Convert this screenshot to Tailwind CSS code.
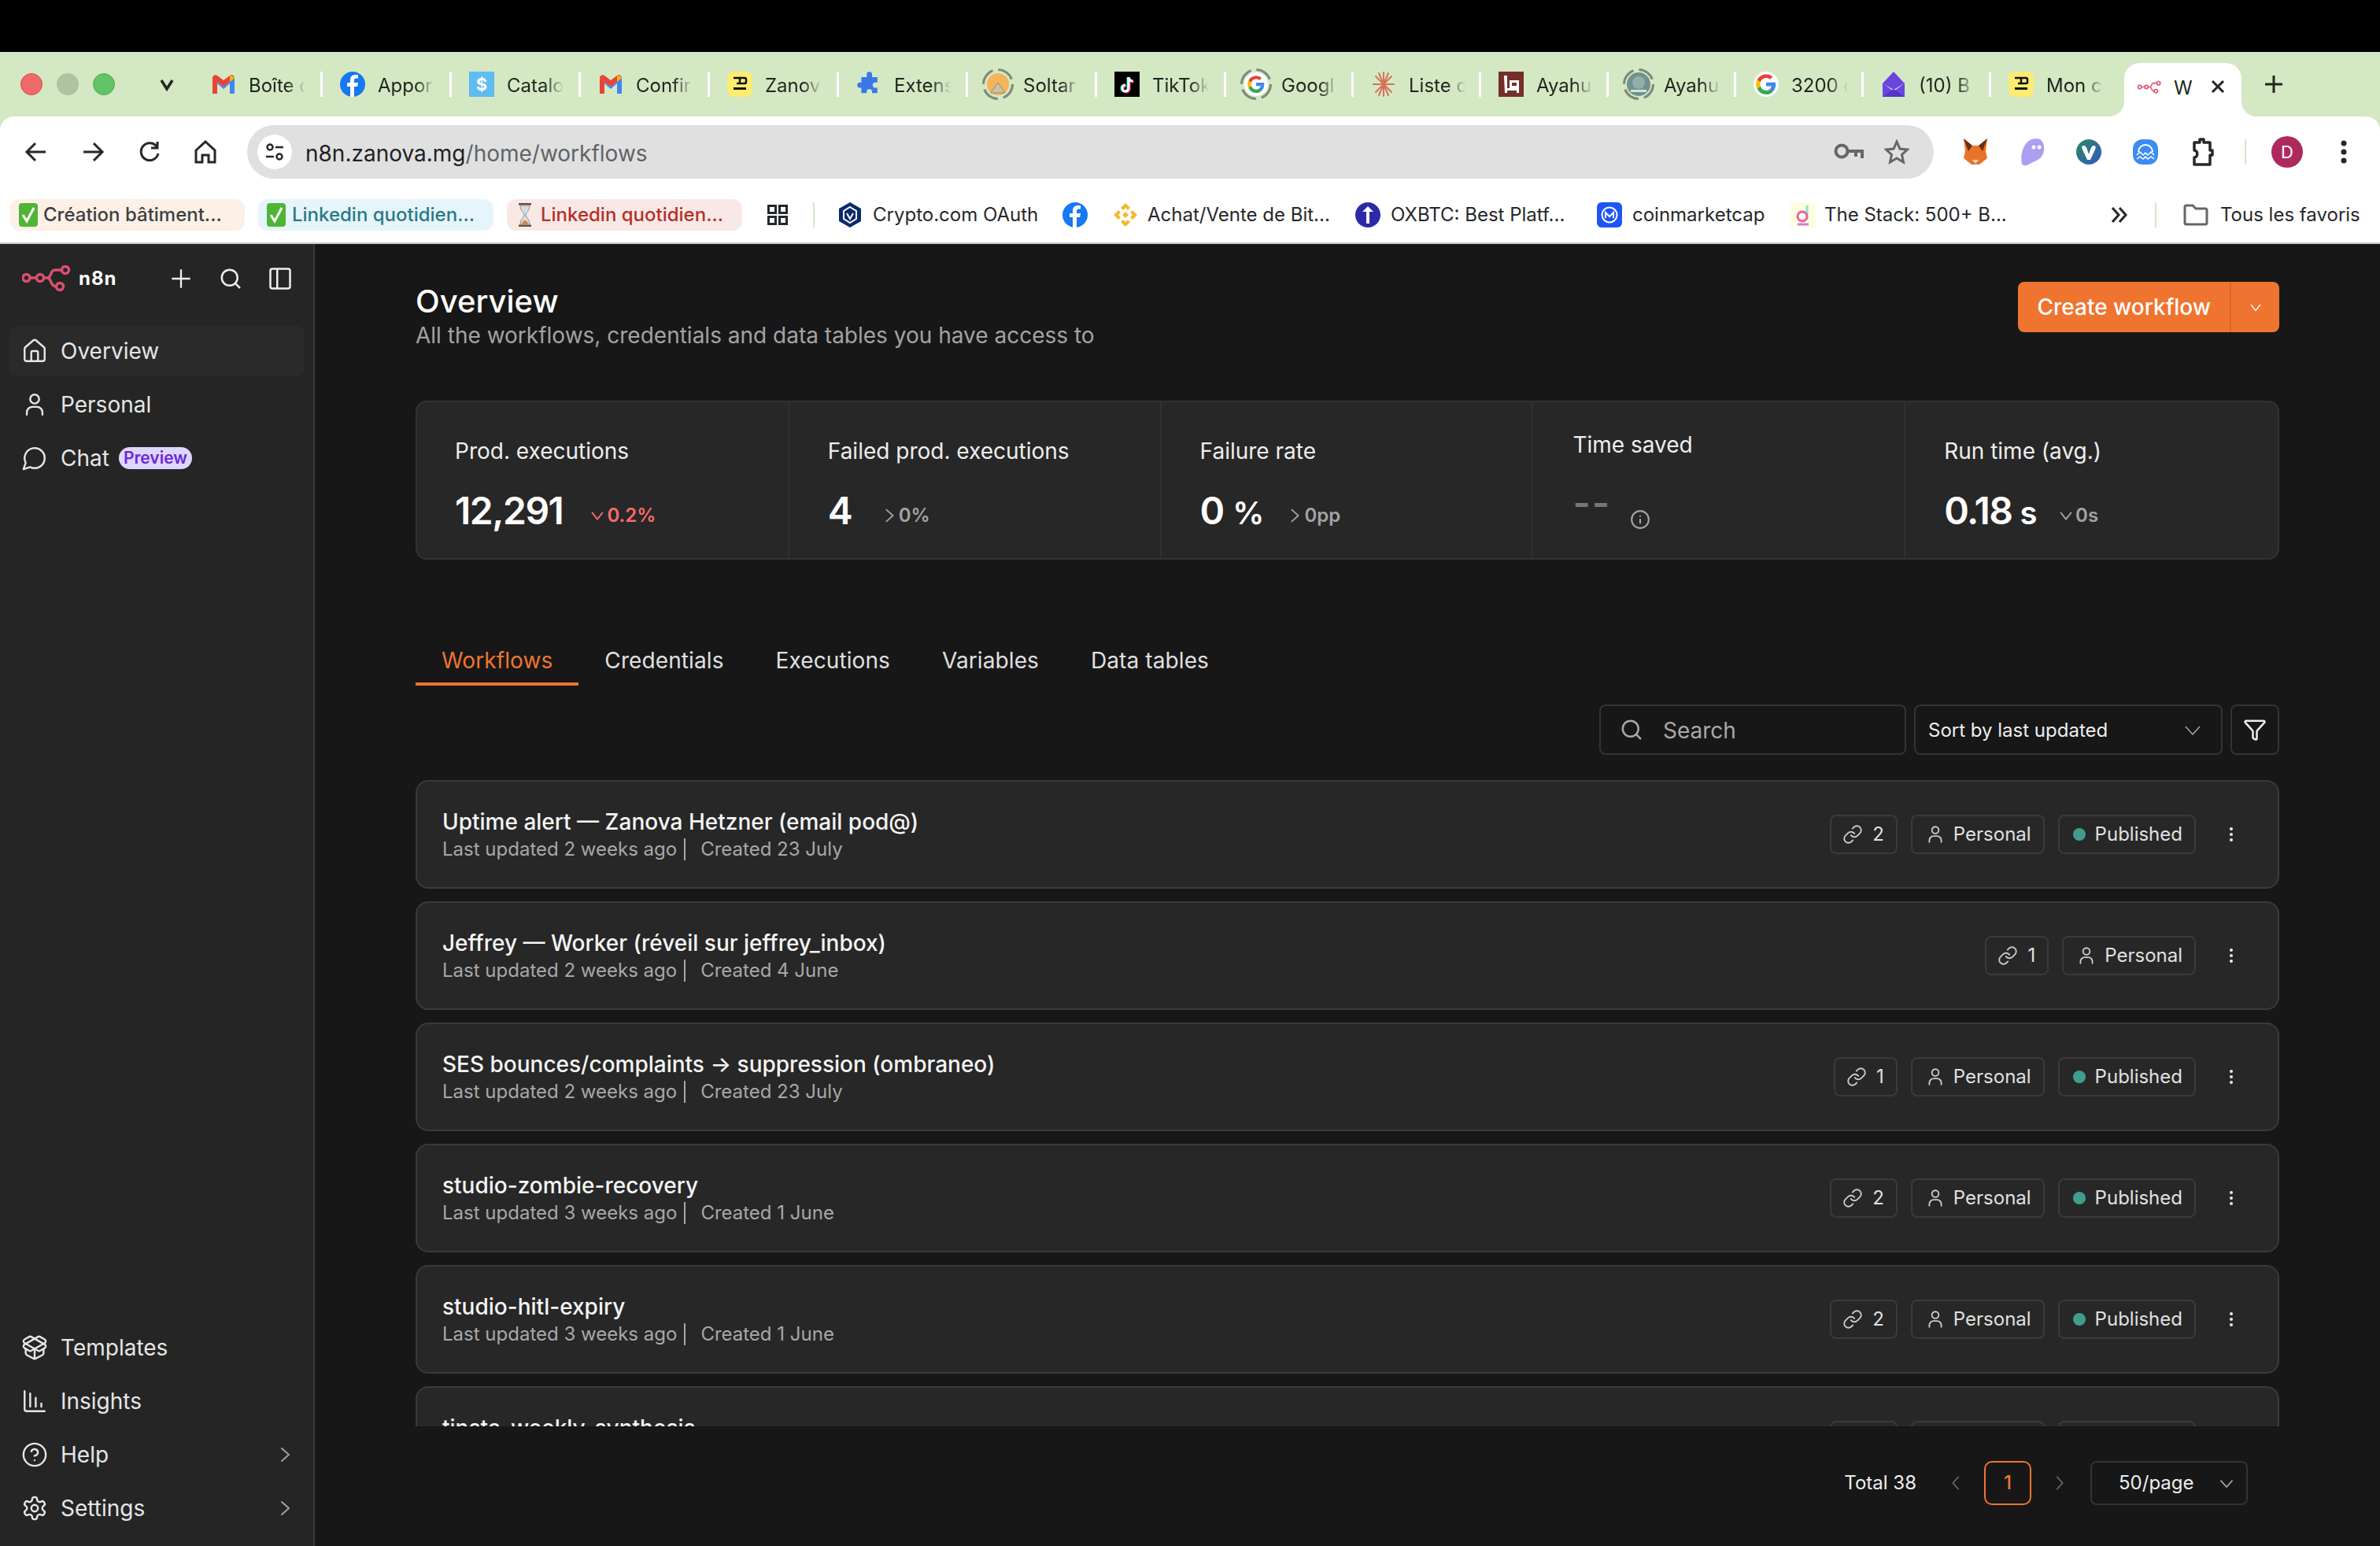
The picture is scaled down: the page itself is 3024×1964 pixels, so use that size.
<!DOCTYPE html>
<html lang="en">
<head>
  <meta charset="UTF-8" />
  <title>n8n Overview</title>
  <script src="https://cdn.jsdelivr.net/npm/@tailwindcss/browser@4"></script>
</head>
<body class="bg-black font-['Inter',sans-serif] overflow-hidden">

  <!-- shared icons -->
  <svg class="hidden">
    <symbol id="i-gmail" viewBox="0 0 32 32">
      <path d="M2 28V8l14 11L30 8v20h-6V15l-8 7-8-7v13z" fill="#4285f4"/>
      <path d="M2 28V8l6 5v15z" fill="#ea4335"/>
      <path d="M2 8l14 11 14-11v-1a4 4 0 0 0-6-2l-8 6-8-6a4 4 0 0 0-6 2z" fill="#ea4335"/>
      <path d="M24 28V13l6-5v20z" fill="#4285f4"/>
      <path d="M24 5l6 2v1l-6 5z" fill="#fbbc04"/>
    </symbol>
    <symbol id="i-fb" viewBox="0 0 32 32">
      <circle cx="16" cy="16" r="16" fill="#1877f2"/>
      <path d="M18 32V19h4.200l.8-5h-5v-3c0-1.500.7-2.600 2.800-2.600H23V4.200C22 4 20.600 3.900 19.500 3.900c-3.800 0-6.500 2.300-6.500 6.600V14H9v5h4v13z" fill="#fff"/>
    </symbol>
    <symbol id="i-yellow" viewBox="0 0 32 32">
      <rect width="32" height="32" rx="8" fill="#fdec6f"/>
      <rect x="8" y="20" width="16" height="3" fill="#111"/>
      <path d="M8 8h14a2 2 0 0 1 2 2v3a2 2 0 0 1-2 2H12M16 8v7" fill="none" stroke="#111" stroke-width="2.500"/>
    </symbol>
    <symbol id="i-google" viewBox="0 0 32 32">
      <path d="M31 16.400c0-1.100-.1-2.200-.3-3.200H16v6h8.400a7 7 0 0 1-3.100 4.700v3.900h5c3-2.700 4.700-6.700 4.700-11.400z" fill="#4285f4"/>
      <path d="M16 32c4.200 0 7.700-1.400 10.300-3.800l-5-3.900c-1.400.9-3.200 1.500-5.300 1.500-4 0-7.500-2.700-8.700-6.400H2.100v4A16 16 0 0 0 16 32z" fill="#34a853"/>
      <path d="M7.300 19.400a9.500 9.500 0 0 1 0-6.800v-4H2.100a16 16 0 0 0 0 14.800z" fill="#fbbc04"/>
      <path d="M16 6.300c2.300 0 4.300.8 5.900 2.300l4.400-4.400A16 16 0 0 0 2.100 8.600l5.200 4C8.500 9 12 6.300 16 6.300z" fill="#ea4335"/>
    </symbol>
    <symbol id="i-ring" viewBox="0 0 40 40">
      <circle cx="20" cy="20" r="18.500" fill="none" stroke="#7f8a78" stroke-width="3" stroke-dasharray="22 7"/>
    </symbol>
    <symbol id="i-n8n" viewBox="0 0 62 34">
      <g fill="none" stroke="currentColor" stroke-width="3.500">
        <circle cx="5.500" cy="16" r="4.500"/>
        <circle cx="23" cy="16" r="4.500"/>
        <circle cx="55" cy="6" r="4.500"/>
        <circle cx="48" cy="27" r="4.500"/>
        <path d="M10 16h8.500M27.500 16h5c5 0 3-10 9-10h8.500M32.500 16c5 0 3 11 11 11"/>
      </g>
    </symbol>
    <symbol id="i-check" viewBox="0 0 24 30">
      <rect width="24" height="30" rx="4" fill="#4fb535"/>
      <path d="M5 15l5 8 9-17" fill="none" stroke="#fff" stroke-width="3"/>
    </symbol>
    <symbol id="i-link" viewBox="0 0 24 24">
      <g fill="none" stroke="currentColor" stroke-width="1.700" stroke-linecap="round" stroke-linejoin="round">
        <path d="M10 13a5 5 0 0 0 7.540.54l3-3a5 5 0 0 0-7.070-7.070l-1.720 1.710"/>
        <path d="M14 11a5 5 0 0 0-7.540-.54l-3 3a5 5 0 0 0 7.070 7.070l1.710-1.710"/>
      </g>
    </symbol>
    <symbol id="i-user" viewBox="0 0 24 24">
      <g fill="none" stroke="currentColor" stroke-width="1.700" stroke-linecap="round">
        <circle cx="12" cy="7" r="4"/>
        <path d="M5 21v-2a5 5 0 0 1 5-5h4a5 5 0 0 1 5 5v2"/>
      </g>
    </symbol>
    <symbol id="i-dots" viewBox="0 0 24 24">
      <circle cx="12" cy="5" r="2" fill="currentColor"/>
      <circle cx="12" cy="12" r="2" fill="currentColor"/>
      <circle cx="12" cy="19" r="2" fill="currentColor"/>
    </symbol>
    <symbol id="i-down" viewBox="0 0 24 24">
      <path d="m5 8 7 9 7-9" fill="none" stroke="currentColor" stroke-width="2" stroke-linecap="round" stroke-linejoin="round"/>
    </symbol>
    <symbol id="i-right" viewBox="0 0 24 24">
      <path d="m8 4 9 8-9 8" fill="none" stroke="currentColor" stroke-width="2" stroke-linecap="round" stroke-linejoin="round"/>
    </symbol>
    <symbol id="i-search" viewBox="0 0 24 24">
      <g fill="none" stroke="currentColor" stroke-width="2" stroke-linecap="round"><circle cx="11" cy="11" r="8"/><path d="m21 21-4.300-4.300"/></g>
    </symbol>
  </svg>

  <div class="w-[3024px] h-[1964px] flex flex-col overflow-hidden">

    <!-- Browser: black bar -->
    <div class="h-[66px] bg-black shrink-0"></div>

    <div class="bg-[#d4e8c4] shrink-0">
      <!-- Tab strip -->
      <div class="h-[82px] flex items-center text-[24px] text-[#22261f]">
        <div class="w-[246px] flex items-center pl-[26px]">
          <span class="w-[28px] h-[28px] rounded-full bg-[#ef6a6a] border border-[#d9494a]"></span>
          <span class="w-[28px] h-[28px] rounded-full bg-[#aec4a0] ml-[18px]"></span>
          <span class="w-[28px] h-[28px] rounded-full bg-[#62c466] border border-[#4dab52] ml-[18px]"></span>
          <svg class="w-[24px] h-[24px] ml-[54px] text-[#22261f]" viewBox="0 0 24 24"><path d="m5 7 7 11 7-11" fill="none" stroke="currentColor" stroke-width="3.500"/></svg>
        </div>

        <div class="w-[164px] h-[32px] flex items-center pl-[22px] gap-[16px] border-r-[3px] border-white">
          <svg class="w-[32px] h-[32px] shrink-0"><use href="#i-gmail"/></svg>
          <span class="w-[80px] pt-[3px] whitespace-nowrap [mask-image:linear-gradient(90deg,#000_60%,transparent_90%)]">Boîte d</span>
        </div>
        <div class="w-[164px] h-[32px] flex items-center pl-[22px] gap-[16px] border-r-[3px] border-white">
          <svg class="w-[32px] h-[32px] shrink-0"><use href="#i-fb"/></svg>
          <span class="w-[80px] pt-[3px] whitespace-nowrap [mask-image:linear-gradient(90deg,#000_60%,transparent_90%)]">Appor</span>
        </div>
        <div class="w-[164px] h-[32px] flex items-center pl-[22px] gap-[16px] border-r-[3px] border-white">
          <span class="w-[32px] h-[32px] shrink-0 bg-[#5fbcf0] text-white text-[22px] font-bold flex items-center justify-center">$</span>
          <span class="w-[80px] pt-[3px] whitespace-nowrap [mask-image:linear-gradient(90deg,#000_60%,transparent_90%)]">Catalo</span>
        </div>
        <div class="w-[164px] h-[32px] flex items-center pl-[22px] gap-[16px] border-r-[3px] border-white">
          <svg class="w-[32px] h-[32px] shrink-0"><use href="#i-gmail"/></svg>
          <span class="w-[80px] pt-[3px] whitespace-nowrap [mask-image:linear-gradient(90deg,#000_60%,transparent_90%)]">Confir</span>
        </div>
        <div class="w-[164px] h-[32px] flex items-center pl-[22px] gap-[16px] border-r-[3px] border-white">
          <svg class="w-[32px] h-[32px] shrink-0"><use href="#i-yellow"/></svg>
          <span class="w-[80px] pt-[3px] whitespace-nowrap [mask-image:linear-gradient(90deg,#000_60%,transparent_90%)]">Zanov</span>
        </div>
        <div class="w-[164px] h-[32px] flex items-center pl-[22px] gap-[16px] border-r-[3px] border-white">
          <svg class="w-[32px] h-[32px] shrink-0" viewBox="0 0 32 32"><path d="M12 3a4 4 0 0 1 8 0v4h8v8h-3a4 4 0 0 0 0 8h3v8h-8v-2a4 4 0 0 0-8 0v2H4v-8H2a4 4 0 0 1 0-8h2V7h8z" fill="#3b78e7" transform="translate(3 1) scale(.85)"/></svg>
          <span class="w-[80px] pt-[3px] whitespace-nowrap [mask-image:linear-gradient(90deg,#000_60%,transparent_90%)]">Extens</span>
        </div>
        <div class="w-[164px] h-[32px] flex items-center pl-[22px] gap-[16px] border-r-[3px] border-white">
          <span class="relative w-[32px] h-[32px] shrink-0 flex items-center justify-center">
            <svg class="absolute w-[40px] h-[40px]"><use href="#i-ring"/></svg>
            <svg class="w-[28px] h-[28px]" viewBox="0 0 28 28"><circle cx="14" cy="14" r="14" fill="#f4b45a"/><path d="M14 12 5 25h18z" fill="#cfc2a4" stroke="#8d8a78"/></svg>
          </span>
          <span class="w-[80px] pt-[3px] whitespace-nowrap [mask-image:linear-gradient(90deg,#000_60%,transparent_90%)]">Soltar</span>
        </div>
        <div class="w-[164px] h-[32px] flex items-center pl-[22px] gap-[16px] border-r-[3px] border-white">
          <svg class="w-[32px] h-[32px] shrink-0" viewBox="0 0 32 32"><rect width="32" height="32" fill="#000"/><path d="M18 7v14a4 4 0 1 1-4-4M18 7c.5 3 2.500 5 5.500 5" fill="none" stroke="#25f4ee" stroke-width="3" transform="translate(-1 0)"/><path d="M18 7v14a4 4 0 1 1-4-4M18 7c.5 3 2.500 5 5.500 5" fill="none" stroke="#fe2c55" stroke-width="3" transform="translate(1 1)"/><path d="M18 7v14a4 4 0 1 1-4-4M18 7c.5 3 2.500 5 5.500 5" fill="none" stroke="#fff" stroke-width="3"/></svg>
          <span class="w-[80px] pt-[3px] whitespace-nowrap [mask-image:linear-gradient(90deg,#000_60%,transparent_90%)]">TikTok</span>
        </div>
        <div class="w-[162px] h-[32px] flex items-center pl-[22px] gap-[16px] border-r-[3px] border-white">
          <span class="relative w-[32px] h-[32px] shrink-0 flex items-center justify-center">
            <svg class="absolute w-[40px] h-[40px]"><use href="#i-ring"/></svg>
            <span class="w-[30px] h-[30px] bg-white rounded-full flex items-center justify-center"><svg class="w-[22px] h-[22px]"><use href="#i-google"/></svg></span>
          </span>
          <span class="w-[80px] pt-[3px] whitespace-nowrap [mask-image:linear-gradient(90deg,#000_60%,transparent_90%)]">Googl</span>
        </div>
        <div class="w-[162px] h-[32px] flex items-center pl-[22px] gap-[16px] border-r-[3px] border-white">
          <svg class="w-[32px] h-[32px] shrink-0" viewBox="0 0 32 32"><g stroke="#d4745a" stroke-width="2" stroke-linecap="round"><path d="M16 1v30M3 16h26M6 6l20 20M26 6 6 26M10 2l12 28M22 2 10 30"/></g></svg>
          <span class="w-[80px] pt-[3px] whitespace-nowrap [mask-image:linear-gradient(90deg,#000_60%,transparent_90%)]">Liste d</span>
        </div>
        <div class="w-[162px] h-[32px] flex items-center pl-[22px] gap-[16px] border-r-[3px] border-white">
          <svg class="w-[32px] h-[32px] shrink-0" viewBox="0 0 32 32"><rect width="32" height="32" fill="#752f2a"/><path d="M7 5h4v16h3V11h12v16h-3v-3H11v3H8z" fill="#fff"/><path d="M17 14h6v4h-6z" fill="#752f2a"/></svg>
          <span class="w-[80px] pt-[3px] whitespace-nowrap [mask-image:linear-gradient(90deg,#000_60%,transparent_90%)]">Ayahu</span>
        </div>
        <div class="w-[162px] h-[32px] flex items-center pl-[22px] gap-[16px] border-r-[3px] border-white">
          <span class="relative w-[32px] h-[32px] shrink-0 flex items-center justify-center">
            <svg class="absolute w-[40px] h-[40px]"><use href="#i-ring"/></svg>
            <svg class="w-[30px] h-[30px]" viewBox="0 0 30 30"><circle cx="15" cy="15" r="15" fill="#6f9290"/><circle cx="15" cy="13" r="8" fill="#94aeaa"/><path d="M5 22h20v3H5z" fill="#d8e2dd"/></svg>
          </span>
          <span class="w-[80px] pt-[3px] whitespace-nowrap [mask-image:linear-gradient(90deg,#000_60%,transparent_90%)]">Ayahu</span>
        </div>
        <div class="w-[162px] h-[32px] flex items-center pl-[22px] gap-[16px] border-r-[3px] border-white">
          <span class="w-[32px] h-[32px] shrink-0 bg-white rounded-full flex items-center justify-center"><svg class="w-[26px] h-[26px]"><use href="#i-google"/></svg></span>
          <span class="w-[80px] pt-[3px] whitespace-nowrap [mask-image:linear-gradient(90deg,#000_60%,transparent_90%)]">3200 c</span>
        </div>
        <div class="w-[162px] h-[32px] flex items-center pl-[22px] gap-[16px] border-r-[3px] border-white">
          <svg class="w-[32px] h-[32px] shrink-0" viewBox="0 0 32 32"><path d="M16 0 30 15v17H2V15z" fill="#6a45e0"/><path d="M2 15l14 8 14-8L16 25 8 19z" fill="#d4e8c4"/><path d="M2 32 16 22l14 10z" fill="#5533c7"/></svg>
          <span class="w-[80px] pt-[3px] whitespace-nowrap [mask-image:linear-gradient(90deg,#000_60%,transparent_90%)]">(10) B</span>
        </div>
        <div class="w-[169px] h-[32px] flex items-center pl-[22px] gap-[16px]">
          <svg class="w-[32px] h-[32px] shrink-0"><use href="#i-yellow"/></svg>
          <span class="w-[80px] pt-[3px] whitespace-nowrap [mask-image:linear-gradient(90deg,#000_60%,transparent_90%)]">Mon c</span>
        </div>

        <!-- Active tab -->
        <div class="relative self-end w-[149px] h-[68px] bg-white rounded-t-[20px] flex items-center pl-[17px] pb-[6px]">
          <svg class="absolute -left-[20px] bottom-0 w-[20px] h-[20px]" viewBox="0 0 20 20"><path d="M20 0v20H0C12 20 20 12 20 0z" fill="#fff"/></svg>
          <svg class="absolute -right-[20px] bottom-0 w-[20px] h-[20px]" viewBox="0 0 20 20"><path d="M0 0v20h20C8 20 0 12 0 0z" fill="#fff"/></svg>
          <svg class="w-[30px] h-[22px] text-[#dd5a78]"><use href="#i-n8n"/></svg>
          <span class="ml-[16px] pt-[2px]">W</span>
          <svg class="w-[22px] h-[22px] ml-[21px] mb-[2px]" viewBox="0 0 22 22"><path d="m4 4 14 14M18 4 4 18" stroke="#22261f" stroke-width="3"/></svg>
        </div>
        <svg class="w-[26px] h-[26px] ml-[28px] text-[#22261f]" viewBox="0 0 26 26"><path d="M13 2v22M2 13h22" stroke="currentColor" stroke-width="3"/></svg>
      </div>

      <!-- Address toolbar -->
      <div class="h-[90px] bg-white rounded-t-[18px] flex items-center">
        <div class="w-[314px] flex items-center pl-[10px] text-[#25282b]">
          <span class="w-[72px] flex justify-center"><svg class="w-[30px] h-[30px]" viewBox="0 0 30 30"><path d="M27 15H4M14 4 3 15l11 11" fill="none" stroke="currentColor" stroke-width="3"/></svg></span>
          <span class="w-[72px] flex justify-center"><svg class="w-[30px] h-[30px]" viewBox="0 0 30 30"><path d="M3 15h23M16 4l11 11-11 11" fill="none" stroke="currentColor" stroke-width="3"/></svg></span>
          <span class="w-[72px] flex justify-center"><svg class="w-[30px] h-[30px]" viewBox="0 0 30 30"><path d="M24 8a11 11 0 1 0 2 9M25 2v8h-8" fill="none" stroke="currentColor" stroke-width="3"/></svg></span>
          <span class="w-[70px] flex justify-center"><svg class="w-[30px] h-[30px]" viewBox="0 0 30 30"><path d="M3 13 15 2l12 11v15h-8v-9h-8v9H3z" fill="none" stroke="currentColor" stroke-width="3"/></svg></span>
        </div>
        <div class="w-[2143px] h-[68px] rounded-full bg-[#e0e0e0] flex items-center pl-[13px] pr-[31px]">
          <span class="w-[44px] h-[44px] rounded-full bg-white flex items-center justify-center">
            <svg class="w-[26px] h-[26px]" viewBox="0 0 26 26"><g fill="none" stroke="#25282b" stroke-width="2.500"><circle cx="7" cy="7" r="3.500"/><path d="M14 7h10M2 19h10"/><circle cx="19" cy="19" r="3.500"/></g></svg>
          </span>
          <span class="ml-[17px] pt-[3px] text-[28px] text-[#202124]">n8n.zanova.mg<span class="text-[#5f6368]">/home/workflows</span></span>
          <svg class="ml-auto w-[38px] h-[24px]" viewBox="0 0 38 24"><g fill="none" stroke="#666" stroke-width="4"><circle cx="10" cy="11" r="7.500"/><path d="M17 11h19v9M28 11v7"/></g></svg>
          <svg class="ml-[26px] w-[32px] h-[32px]" viewBox="0 0 32 32"><path d="m16 3 4 9 9.500 1-7 6.500 2 9.500-8.500-5-8.500 5 2-9.500-7-6.500 9.500-1z" fill="none" stroke="#666" stroke-width="3"/></svg>
        </div>
        <div class="flex items-center pl-[17px]">
          <span class="w-[72px] flex justify-center"><svg class="w-[34px] h-[38px]" viewBox="0 0 34 38"><path d="M2 2l11 9h8l11-9-2 16 2 9-10 8H12L2 27l2-9z" fill="#e8742a"/><path d="M2 2l11 9-5 7zM32 2 21 11l5 7z" fill="#6b2f10"/><path d="M13 29h8l-4 5z" fill="#e7d5c6"/></svg></span>
          <span class="w-[72px] flex justify-center"><svg class="w-[34px] h-[38px]" viewBox="0 0 34 38"><path d="M4 34C1 20 8 2 22 2c8 0 11 7 10 15-1 9-8 13-14 15-6 3-11 7-14 2z" fill="#ab9ff2"/><circle cx="19" cy="13" r="2.500" fill="#fff"/><circle cx="26" cy="13" r="2.500" fill="#fff"/></svg></span>
          <span class="w-[72px] flex justify-center"><svg class="w-[32px] h-[32px]" viewBox="0 0 32 32"><defs><linearGradient id="g-v" x1="0" y1="0" x2="1" y2="1"><stop offset="0" stop-color="#2b8a5b"/><stop offset="1" stop-color="#3356c9"/></linearGradient></defs><circle cx="16" cy="16" r="16" fill="url(#g-v)"/><path d="M9 8c3 0 4 2 5 5l2 6 2-6c1-3 2-5 5-5 2 0 2 3 1 5l-6 13h-4L8 13c-1-2-1-5 1-5z" fill="#fff"/></svg></span>
          <span class="w-[72px] flex justify-center"><svg class="w-[32px] h-[32px]" viewBox="0 0 32 32"><rect width="32" height="32" rx="12" fill="#3f8cf0"/><path d="M7 16a9 9 0 0 1 18 0" fill="none" stroke="#fff" stroke-width="2"/><path d="M5 20l4-4 4 4 3-3 3 3 4-4 4 4M5 25l4-3 4 3 3-3 3 3 4-3 4 3" fill="none" stroke="#fff" stroke-width="1.500"/></svg></span>
          <span class="w-[72px] flex justify-center"><svg class="w-[32px] h-[38px]" viewBox="0 0 32 38"><path d="M6 7h7V3h5v4h8v10h3v6h-3v12H6V26c5 0 5-9 0-9z" fill="none" stroke="#25282b" stroke-width="3.500" stroke-linejoin="round"/></svg></span>
          <span class="w-[2px] h-[32px] bg-[#d4e8c4] ml-[18px]"></span>
          <span class="w-[40px] h-[40px] rounded-full bg-[#ae2a5c] text-white text-[22px] flex items-center justify-center ml-[32px]">D</span>
          <svg class="w-[8px] h-[32px] ml-[48px]" viewBox="0 0 8 32"><circle cx="4" cy="5" r="3.500" fill="#25282b"/><circle cx="4" cy="16" r="3.500" fill="#25282b"/><circle cx="4" cy="27" r="3.500" fill="#25282b"/></svg>
        </div>
      </div>
    </div>

    <!-- Bookmarks bar -->
    <div class="h-[72px] shrink-0 bg-white border-b-2 border-[#c9c9c9] flex items-center pl-[13px] text-[24px] text-[#26282b] whitespace-nowrap">
      <span class="w-[298px] h-[40px] rounded-[12px] bg-[#fdf0e6] text-[#3c4043] flex items-center pl-[11px] gap-[7px] font-medium"><svg class="w-[24px] h-[30px]"><use href="#i-check"/></svg>Création bâtiment...</span>
      <span class="w-[299px] h-[40px] rounded-[12px] bg-[#e6f5fb] text-[#2b7a84] flex items-center pl-[11px] gap-[8px] font-medium ml-[17px]"><svg class="w-[24px] h-[30px]"><use href="#i-check"/></svg>Linkedin quotidien...</span>
      <span class="w-[299px] h-[40px] rounded-[12px] bg-[#f9e9e6] text-[#b5302a] flex items-center pl-[13px] gap-[10px] font-medium ml-[17px]">
        <svg class="w-[20px] h-[30px]" viewBox="0 0 20 30"><path d="M2 1h16M2 29h16" stroke="#6b4a33" stroke-width="3"/><path d="M4 3h12c0 7-5 9-5 12s5 5 5 12H4c0-7 5-9 5-12S4 10 4 3z" fill="#d5dde0" stroke="#8a8f92"/><path d="M6 27c0-3 2-5 4-5s4 2 4 5z" fill="#c98b4a"/></svg>Linkedin quotidien...</span>
      <svg class="w-[26px] h-[26px] ml-[32px]" viewBox="0 0 26 26"><g fill="none" stroke="#25282b" stroke-width="3"><rect x="1.500" y="1.500" width="9" height="9"/><rect x="15.500" y="1.500" width="9" height="9"/><rect x="1.500" y="15.500" width="9" height="9"/><rect x="15.500" y="15.500" width="9" height="9"/></g></svg>
      <span class="w-[2px] h-[32px] bg-[#d4e8c4] ml-[32px] mr-[29px]"></span>

      <span class="w-[286px] flex items-center gap-[13px]">
        <svg class="w-[32px] h-[32px]" viewBox="0 0 32 32"><path d="M16 0 30 8v16l-14 8-14-8V8z" fill="#0b2a6b"/><path d="M16 6 24 11v10l-8 5-8-5V11z" fill="none" stroke="#fff" stroke-width="2"/><path d="m12 14 4 7 4-7" fill="none" stroke="#fff" stroke-width="2"/></svg>Crypto.com OAuth</span>
      <span class="w-[64px] flex items-center"><svg class="w-[32px] h-[32px]"><use href="#i-fb"/></svg></span>
      <span class="w-[308px] flex items-center gap-[12px]">
        <svg class="w-[32px] h-[32px]" viewBox="0 0 32 32"><g fill="#f3ba2f"><path d="M16 1l6 6-3 3-3-3-3 3-3-3zM7 10l3 3-3 3 3 3-3 3-6-6zM25 10l6 6-6 6-3-3 3-3-3-3zM16 25l3-3 3 3-6 6-6-6 3-3z"/><path d="M16 12l4 4-4 4-4-4z"/></g></svg>Achat/Vente de Bit...</span>
      <span class="w-[307px] flex items-center gap-[13px]">
        <svg class="w-[32px] h-[32px]" viewBox="0 0 32 32"><circle cx="16" cy="16" r="16" fill="#2d2aa8"/><path d="M16 5l7 7h-5v15h-4V12H9z" fill="#fff"/></svg>OXBTC: Best Platf...</span>
      <span class="w-[246px] flex items-center gap-[13px]">
        <svg class="w-[32px] h-[32px]" viewBox="0 0 32 32"><rect width="32" height="32" rx="6" fill="#1f55f5"/><circle cx="16" cy="16" r="9.500" fill="none" stroke="#fff" stroke-width="2"/><path d="M11 20v-7l5 5 5-5v7" fill="none" stroke="#fff" stroke-width="2"/></svg>coinmarketcap</span>
      <span class="w-[400px] flex items-center gap-[11px]">
        <svg class="w-[32px] h-[32px]" viewBox="0 0 32 32"><rect width="32" height="32" fill="#fdfde0"/><path d="M21 4v18" stroke="#8fe3c5" stroke-width="3"/><circle cx="15" cy="18" r="6" fill="none" stroke="#ef5fa7" stroke-width="3"/><path d="M9 28h14" stroke="#d07ae8" stroke-width="3"/></svg>The Stack: 500+ B...</span>
      <svg class="w-[24px] h-[24px] ml-[5px]" viewBox="0 0 24 24"><path d="m4 3 8 9-8 9M13 3l8 9-8 9" fill="none" stroke="#25282b" stroke-width="3"/></svg>
      <span class="w-[2px] h-[32px] bg-[#d4e8c4] ml-[34px]"></span>
      <svg class="w-[32px] h-[28px] ml-[34px]" viewBox="0 0 32 28"><path d="M2 4a2 2 0 0 1 2-2h8l4 4h12a2 2 0 0 1 2 2v16a2 2 0 0 1-2 2H4a2 2 0 0 1-2-2z" fill="none" stroke="#666" stroke-width="3"/></svg>
      <span class="ml-[15px]">Tous les favoris</span>
    </div>

    <!-- App -->
    <div class="flex-1 min-h-0 flex bg-[#171717]">

      <!-- Sidebar -->
      <aside class="w-[400px] shrink-0 bg-[#252525] border-r-2 border-[#3a3a3a] flex flex-col text-[28px] text-[#e6e6e6] pb-[16px]">
        <div class="h-[88px] flex items-center pl-[28px] shrink-0">
          <svg class="w-[62px] h-[34px] text-[#d9506f]"><use href="#i-n8n"/></svg>
          <span class="ml-[10px] font-bold text-[24px] tracking-[1px] text-white">n8n</span>
          <svg class="w-[28px] h-[28px] ml-[67px] text-[#eee]" viewBox="0 0 24 24"><path d="M12 2v20M2 12h20" stroke="currentColor" stroke-width="2"/></svg>
          <svg class="w-[30px] h-[30px] ml-[34px] text-[#eee]"><use href="#i-search"/></svg>
          <svg class="w-[30px] h-[30px] ml-[33px] text-[#eee]" viewBox="0 0 24 24"><g fill="none" stroke="currentColor" stroke-width="2"><rect x="2" y="2" width="20" height="20" rx="2"/><path d="M9 2v20"/></g></svg>
        </div>

        <nav class="mt-[16px] mx-[12px] flex flex-col gap-[4px]">
          <a class="h-[64px] rounded-[8px] bg-[#2a2a2a] flex items-center pl-[15px] gap-[16px]">
            <svg class="w-[34px] h-[34px]" viewBox="0 0 24 24"><g fill="none" stroke="currentColor" stroke-width="1.700" stroke-linecap="round" stroke-linejoin="round"><path d="M15 21v-8a1 1 0 0 0-1-1h-4a1 1 0 0 0-1 1v8"/><path d="M3 10a2 2 0 0 1 .709-1.528l7-5.999a2 2 0 0 1 2.582 0l7 5.999A2 2 0 0 1 21 10v9a2 2 0 0 1-2 2H5a2 2 0 0 1-2-2z"/></g></svg>
            Overview
          </a>
          <a class="h-[64px] rounded-[8px] flex items-center pl-[15px] gap-[16px]">
            <svg class="w-[34px] h-[34px]"><use href="#i-user"/></svg>
            Personal
          </a>
          <a class="h-[64px] rounded-[8px] flex items-center pl-[15px] gap-[16px]">
            <svg class="w-[34px] h-[34px]" viewBox="0 0 24 24"><path d="M7.900 20A9 9 0 1 0 4 16.100L2 22Z" fill="none" stroke="currentColor" stroke-width="1.700" stroke-linejoin="round"/></svg>
            <span class="flex items-center gap-[12px]">Chat <span class="h-[28px] w-[93px] rounded-full bg-[#ddd6fe] text-[#6d28d9] text-[21px] font-semibold flex items-center justify-center">Preview</span></span>
          </a>
        </nav>

        <nav class="mt-auto mx-[12px] flex flex-col gap-[4px]">
          <a class="h-[64px] flex items-center pl-[15px] gap-[16px]">
            <svg class="w-[34px] h-[34px]" viewBox="0 0 24 24"><g fill="none" stroke="currentColor" stroke-width="1.700" stroke-linecap="round" stroke-linejoin="round"><path d="M12 22v-9"/><path d="M15.170 2.210a1.670 1.670 0 0 1 1.630 0L21 4.570a1.930 1.930 0 0 1 0 3.360L8.820 14.790a1.655 1.655 0 0 1-1.640 0L3 12.430a1.930 1.930 0 0 1 0-3.360z"/><path d="M20 13v3.870a2.060 2.060 0 0 1-1.110 1.830l-6 3.080a1.930 1.930 0 0 1-1.780 0l-6-3.080A2.060 2.060 0 0 1 4 16.870V13"/><path d="M21 12.430a1.930 1.930 0 0 0 0-3.360L8.830 2.200a1.640 1.640 0 0 0-1.630 0L3 4.570a1.930 1.930 0 0 0 0 3.360l12.180 6.860a1.636 1.636 0 0 0 1.630 0z"/></g></svg>
            Templates
          </a>
          <a class="h-[64px] flex items-center pl-[15px] gap-[16px]">
            <svg class="w-[34px] h-[34px]" viewBox="0 0 24 24"><g fill="none" stroke="currentColor" stroke-width="1.700" stroke-linecap="round" stroke-linejoin="round"><path d="M13 17V9"/><path d="M18 17v-3"/><path d="M3 3v16a2 2 0 0 0 2 2h16"/><path d="M8 17V5"/></g></svg>
            Insights
          </a>
          <a class="h-[64px] flex items-center pl-[15px] gap-[16px]">
            <svg class="w-[34px] h-[34px]" viewBox="0 0 24 24"><g fill="none" stroke="currentColor" stroke-width="1.700" stroke-linecap="round" stroke-linejoin="round"><circle cx="12" cy="12" r="10"/><path d="M9.090 9a3 3 0 0 1 5.830 1c0 2-3 3-3 3"/><path d="M12 17h.01"/></g></svg>
            Help
            <svg class="w-[24px] h-[24px] ml-auto mr-[12px] text-[#a0a0a0]"><use href="#i-right"/></svg>
          </a>
          <a class="h-[64px] flex items-center pl-[15px] gap-[16px]">
            <svg class="w-[34px] h-[34px]" viewBox="0 0 24 24"><g fill="none" stroke="currentColor" stroke-width="1.700" stroke-linecap="round" stroke-linejoin="round"><path d="M12.220 2h-.44a2 2 0 0 0-2 2v.18a2 2 0 0 1-1 1.730l-.43.25a2 2 0 0 1-2 0l-.15-.08a2 2 0 0 0-2.730.73l-.22.38a2 2 0 0 0 .73 2.730l.15.1a2 2 0 0 1 1 1.720v.51a2 2 0 0 1-1 1.740l-.15.09a2 2 0 0 0-.73 2.730l.22.38a2 2 0 0 0 2.730.73l.15-.08a2 2 0 0 1 2 0l.43.25a2 2 0 0 1 1 1.730V20a2 2 0 0 0 2 2h.44a2 2 0 0 0 2-2v-.18a2 2 0 0 1 1-1.730l.43-.25a2 2 0 0 1 2 0l.15.08a2 2 0 0 0 2.730-.73l.22-.39a2 2 0 0 0-.73-2.730l-.15-.08a2 2 0 0 1-1-1.740v-.5a2 2 0 0 1 1-1.740l.15-.09a2 2 0 0 0 .73-2.730l-.22-.38a2 2 0 0 0-2.730-.73l-.15.08a2 2 0 0 1-2 0l-.43-.25a2 2 0 0 1-1-1.730V4a2 2 0 0 0-2-2z"/><circle cx="12" cy="12" r="3"/></g></svg>
            Settings
            <svg class="w-[24px] h-[24px] ml-auto mr-[12px] text-[#a0a0a0]"><use href="#i-right"/></svg>
          </a>
        </nav>
      </aside>

      <!-- Main -->
      <main class="flex-1 min-w-0 flex flex-col">
        <div class="flex-1 min-h-0 overflow-hidden pt-[48px] pl-[128px] pr-[128px]">

          <!-- Page header -->
          <div class="flex justify-between items-start mb-[63px]">
            <div>
              <h1 class="text-[40px] leading-[48px] pt-[1px] -mb-[1px] font-medium text-white">Overview</h1>
              <p class="text-[28px] leading-[40px] text-[#a3a3a3]">All the workflows, credentials and data tables you have access to</p>
            </div>
            <div class="flex h-[64px] rounded-[8px] bg-[#ef7430] text-white">
              <span class="px-[24px] text-[28px] font-medium flex items-center">Create workflow</span>
              <span class="w-[63px] border-l-2 border-[#d9682a] flex items-center justify-center"><svg class="w-[18px] h-[18px]" viewBox="0 0 24 24"><path d="m4 8 8 10 8-10" fill="none" stroke="currentColor" stroke-width="1.800"/></svg></span>
            </div>
          </div>

          <!-- Stats -->
          <div class="grid grid-cols-5 h-[202px] rounded-[14px] bg-[#272727] border-2 border-[#323232] text-[#eee]">
            <div class="border-r-2 border-[#303030] pl-[48px] pt-[42px]">
              <p class="text-[28px] leading-[40px]">Prod. executions</p>
              <div class="mt-[26px] h-[60px] flex items-center">
                <span class="text-[48px] font-semibold text-white tracking-[-1.500px]">12,291</span>
                <svg class="w-[22px] h-[22px] ml-[33px] mt-[11px] text-[#f76b6b]"><use href="#i-down"/></svg>
                <span class="text-[24px] font-semibold text-[#f76b6b] mt-[11px] ml-[1px]">0.2%</span>
              </div>
            </div>
            <div class="border-r-2 border-[#303030] pl-[49px] pt-[42px]">
              <p class="text-[28px] leading-[40px]">Failed prod. executions</p>
              <div class="mt-[26px] h-[60px] flex items-center">
                <span class="text-[48px] font-semibold text-white">4</span>
                <svg class="w-[22px] h-[22px] ml-[35px] mt-[11px] text-[#a3a3a3]"><use href="#i-right"/></svg>
                <span class="text-[24px] font-semibold text-[#a3a3a3] mt-[11px] ml-[1px]">0%</span>
              </div>
            </div>
            <div class="border-r-2 border-[#303030] pl-[49px] pt-[42px]">
              <p class="text-[28px] leading-[40px]">Failure rate</p>
              <div class="mt-[26px] h-[60px] flex items-center">
                <span class="text-[48px] font-semibold text-white">0<span class="text-[40px] ml-[10px]">%</span></span>
                <svg class="w-[22px] h-[22px] ml-[28px] mt-[11px] text-[#a3a3a3]"><use href="#i-right"/></svg>
                <span class="text-[24px] font-semibold text-[#a3a3a3] mt-[11px] ml-[1px]">0pp</span>
              </div>
            </div>
            <div class="border-r-2 border-[#303030] pl-[50px] pt-[34px]">
              <p class="text-[28px] leading-[40px]">Time saved</p>
              <div class="mt-[24px] h-[60px] flex items-start">
                <span class="text-[48px] leading-[60px] font-semibold text-[#777] tracking-[2px]">--</span>
                <svg class="w-[26px] h-[26px] ml-[24px] mt-[38px] text-[#a3a3a3]" viewBox="0 0 24 24"><g fill="none" stroke="currentColor" stroke-width="2" stroke-linecap="round"><circle cx="12" cy="12" r="10"/><path d="M12 16v-4M12 8h.01"/></g></svg>
              </div>
            </div>
            <div class="pl-[49px] pt-[42px]">
              <p class="text-[28px] leading-[40px]">Run time (avg.)</p>
              <div class="mt-[26px] h-[60px] flex items-center">
                <span class="text-[48px] font-semibold text-white tracking-[-1.500px]">0.18<span class="text-[40px] ml-[10px]">s</span></span>
                <svg class="w-[22px] h-[22px] ml-[27px] mt-[11px] text-[#a3a3a3]"><use href="#i-down"/></svg>
                <span class="text-[24px] font-semibold text-[#a3a3a3] mt-[11px] ml-[1px]">0s</span>
              </div>
            </div>
          </div>

          <!-- Tabs -->
          <div class="mt-[106px] flex text-[28px] leading-[40px] tracking-[0.1px] text-[#e0e0e0]">
            <span class="px-[33px] pt-[2px] pb-[8px] border-b-4 border-[#ef7430] text-[#ef7430]">Workflows</span>
            <span class="px-[33px] pt-[2px] pb-[12px]">Credentials</span>
            <span class="px-[33px] pt-[2px] pb-[12px]">Executions</span>
            <span class="px-[33px] pt-[2px] pb-[12px]">Variables</span>
            <span class="px-[33px] pt-[2px] pb-[12px]">Data tables</span>
          </div>

          <!-- Filters -->
          <div class="mt-[24px] flex justify-end h-[64px]">
            <div class="w-[390px] rounded-[8px] border-2 border-[#333] flex items-center pl-[24px] text-[28px] text-[#a8a8a8]">
              <svg class="w-[30px] h-[30px]"><use href="#i-search"/></svg>
              <span class="ml-[25px] pt-[2px]">Search</span>
            </div>
            <div class="w-[392px] ml-[10px] rounded-[8px] border-2 border-[#333] flex items-center pl-[16px] pr-[24px] text-[24px] text-[#eee]">
              <span class="pt-[2px]">Sort by last updated</span>
              <svg class="w-[24px] h-[24px] ml-auto text-[#a8a8a8]" viewBox="0 0 24 24"><path d="m3 8 9 10 9-10" fill="none" stroke="currentColor" stroke-width="1.500"/></svg>
            </div>
            <div class="w-[62px] ml-[10px] rounded-[8px] border-2 border-[#333] flex items-center justify-center text-[#eee]">
              <svg class="w-[30px] h-[30px]" viewBox="0 0 24 24"><path d="M10 20a1 1 0 0 0 .553.895l2 1A1 1 0 0 0 14 21v-7a2 2 0 0 1 .517-1.341L21.740 4.670A1 1 0 0 0 21 3H3a1 1 0 0 0-.742 1.670l7.225 7.989A2 2 0 0 1 10 14z" fill="none" stroke="currentColor" stroke-width="2" stroke-linejoin="round"/></svg>
            </div>
          </div>

          <!-- Workflow list -->
          <div class="mt-[32px] flex flex-col gap-[16px]">

            <div class="h-[138px] shrink-0 rounded-[16px] bg-[#272727] border-2 border-[#3a3a3a] flex items-center pl-[32px] pr-[47px]">
              <div class="flex-1 pt-[2px]">
                <p class="text-[28px] leading-[36px] font-medium text-[#f5f5f5]">Uptime alert — Zanova Hetzner (email pod@)</p>
                <p class="text-[24px] leading-[34px] text-[#a8a8a8] flex items-center">Last updated 2 weeks ago<span class="w-[2px] h-[28px] bg-[#a8a8a8] ml-[9px] mr-[19px]"></span>Created 23 July</p>
              </div>
              <div class="flex items-center gap-[17px] text-[24px] text-[#e0e0e0]">
                <span class="h-[50px] pl-[14px] pr-[15px] rounded-[8px] border-2 border-[#3a3a3a] flex items-center gap-[12px]"><svg class="w-[26px] h-[26px] text-[#ccc]"><use href="#i-link"/></svg>2</span>
                <span class="h-[50px] pl-[16px] pr-[15px] rounded-[8px] border-2 border-[#3a3a3a] flex items-center gap-[10px]"><svg class="w-[26px] h-[26px] text-[#ccc]"><use href="#i-user"/></svg>Personal</span>
                <span class="h-[50px] pl-[17px] pr-[15px] rounded-[8px] border-2 border-[#3a3a3a] flex items-center gap-[12px]"><span class="w-[16px] h-[16px] rounded-full bg-[#3f9d8e]"></span>Published</span>
              </div>
              <svg class="w-[24px] h-[24px] ml-[33px] text-[#eee]"><use href="#i-dots"/></svg>
            </div>

            <div class="h-[138px] shrink-0 rounded-[16px] bg-[#272727] border-2 border-[#3a3a3a] flex items-center pl-[32px] pr-[47px]">
              <div class="flex-1 pt-[2px]">
                <p class="text-[28px] leading-[36px] font-medium text-[#f5f5f5]">Jeffrey — Worker (réveil sur jeffrey_inbox)</p>
                <p class="text-[24px] leading-[34px] text-[#a8a8a8] flex items-center">Last updated 2 weeks ago<span class="w-[2px] h-[28px] bg-[#a8a8a8] ml-[9px] mr-[19px]"></span>Created 4 June</p>
              </div>
              <div class="flex items-center gap-[17px] text-[24px] text-[#e0e0e0]">
                <span class="h-[50px] pl-[14px] pr-[15px] rounded-[8px] border-2 border-[#3a3a3a] flex items-center gap-[12px]"><svg class="w-[26px] h-[26px] text-[#ccc]"><use href="#i-link"/></svg>1</span>
                <span class="h-[50px] pl-[16px] pr-[15px] rounded-[8px] border-2 border-[#3a3a3a] flex items-center gap-[10px]"><svg class="w-[26px] h-[26px] text-[#ccc]"><use href="#i-user"/></svg>Personal</span>
              </div>
              <svg class="w-[24px] h-[24px] ml-[33px] text-[#eee]"><use href="#i-dots"/></svg>
            </div>

            <div class="h-[138px] shrink-0 rounded-[16px] bg-[#272727] border-2 border-[#3a3a3a] flex items-center pl-[32px] pr-[47px]">
              <div class="flex-1 pt-[2px]">
                <p class="text-[28px] leading-[36px] font-medium text-[#f5f5f5]">SES bounces/complaints → suppression (ombraneo)</p>
                <p class="text-[24px] leading-[34px] text-[#a8a8a8] flex items-center">Last updated 2 weeks ago<span class="w-[2px] h-[28px] bg-[#a8a8a8] ml-[9px] mr-[19px]"></span>Created 23 July</p>
              </div>
              <div class="flex items-center gap-[17px] text-[24px] text-[#e0e0e0]">
                <span class="h-[50px] pl-[14px] pr-[15px] rounded-[8px] border-2 border-[#3a3a3a] flex items-center gap-[12px]"><svg class="w-[26px] h-[26px] text-[#ccc]"><use href="#i-link"/></svg>1</span>
                <span class="h-[50px] pl-[16px] pr-[15px] rounded-[8px] border-2 border-[#3a3a3a] flex items-center gap-[10px]"><svg class="w-[26px] h-[26px] text-[#ccc]"><use href="#i-user"/></svg>Personal</span>
                <span class="h-[50px] pl-[17px] pr-[15px] rounded-[8px] border-2 border-[#3a3a3a] flex items-center gap-[12px]"><span class="w-[16px] h-[16px] rounded-full bg-[#3f9d8e]"></span>Published</span>
              </div>
              <svg class="w-[24px] h-[24px] ml-[33px] text-[#eee]"><use href="#i-dots"/></svg>
            </div>

            <div class="h-[138px] shrink-0 rounded-[16px] bg-[#272727] border-2 border-[#3a3a3a] flex items-center pl-[32px] pr-[47px]">
              <div class="flex-1 pt-[2px]">
                <p class="text-[28px] leading-[36px] font-medium text-[#f5f5f5]">studio-zombie-recovery</p>
                <p class="text-[24px] leading-[34px] text-[#a8a8a8] flex items-center">Last updated 3 weeks ago<span class="w-[2px] h-[28px] bg-[#a8a8a8] ml-[9px] mr-[19px]"></span>Created 1 June</p>
              </div>
              <div class="flex items-center gap-[17px] text-[24px] text-[#e0e0e0]">
                <span class="h-[50px] pl-[14px] pr-[15px] rounded-[8px] border-2 border-[#3a3a3a] flex items-center gap-[12px]"><svg class="w-[26px] h-[26px] text-[#ccc]"><use href="#i-link"/></svg>2</span>
                <span class="h-[50px] pl-[16px] pr-[15px] rounded-[8px] border-2 border-[#3a3a3a] flex items-center gap-[10px]"><svg class="w-[26px] h-[26px] text-[#ccc]"><use href="#i-user"/></svg>Personal</span>
                <span class="h-[50px] pl-[17px] pr-[15px] rounded-[8px] border-2 border-[#3a3a3a] flex items-center gap-[12px]"><span class="w-[16px] h-[16px] rounded-full bg-[#3f9d8e]"></span>Published</span>
              </div>
              <svg class="w-[24px] h-[24px] ml-[33px] text-[#eee]"><use href="#i-dots"/></svg>
            </div>

            <div class="h-[138px] shrink-0 rounded-[16px] bg-[#272727] border-2 border-[#3a3a3a] flex items-center pl-[32px] pr-[47px]">
              <div class="flex-1 pt-[2px]">
                <p class="text-[28px] leading-[36px] font-medium text-[#f5f5f5]">studio-hitl-expiry</p>
                <p class="text-[24px] leading-[34px] text-[#a8a8a8] flex items-center">Last updated 3 weeks ago<span class="w-[2px] h-[28px] bg-[#a8a8a8] ml-[9px] mr-[19px]"></span>Created 1 June</p>
              </div>
              <div class="flex items-center gap-[17px] text-[24px] text-[#e0e0e0]">
                <span class="h-[50px] pl-[14px] pr-[15px] rounded-[8px] border-2 border-[#3a3a3a] flex items-center gap-[12px]"><svg class="w-[26px] h-[26px] text-[#ccc]"><use href="#i-link"/></svg>2</span>
                <span class="h-[50px] pl-[16px] pr-[15px] rounded-[8px] border-2 border-[#3a3a3a] flex items-center gap-[10px]"><svg class="w-[26px] h-[26px] text-[#ccc]"><use href="#i-user"/></svg>Personal</span>
                <span class="h-[50px] pl-[17px] pr-[15px] rounded-[8px] border-2 border-[#3a3a3a] flex items-center gap-[12px]"><span class="w-[16px] h-[16px] rounded-full bg-[#3f9d8e]"></span>Published</span>
              </div>
              <svg class="w-[24px] h-[24px] ml-[33px] text-[#eee]"><use href="#i-dots"/></svg>
            </div>

            <div class="h-[138px] shrink-0 rounded-[16px] bg-[#272727] border-2 border-[#3a3a3a] flex items-center pl-[32px] pr-[47px]">
              <div class="flex-1 pt-[2px]">
                <p class="text-[28px] leading-[36px] font-medium text-[#f5f5f5]">tinsta-weekly-synthesis</p>
                <p class="text-[24px] leading-[34px] text-[#a8a8a8]">Last updated 3 weeks ago</p>
              </div>
              <div class="flex items-center gap-[17px] text-[24px] text-[#e0e0e0]">
                <span class="h-[50px] pl-[14px] pr-[15px] rounded-[8px] border-2 border-[#3a3a3a] flex items-center gap-[12px]"><svg class="w-[26px] h-[26px] text-[#ccc]"><use href="#i-link"/></svg>2</span>
                <span class="h-[50px] pl-[16px] pr-[15px] rounded-[8px] border-2 border-[#3a3a3a] flex items-center gap-[10px]"><svg class="w-[26px] h-[26px] text-[#ccc]"><use href="#i-user"/></svg>Personal</span>
                <span class="h-[50px] pl-[17px] pr-[15px] rounded-[8px] border-2 border-[#3a3a3a] flex items-center gap-[12px]"><span class="w-[16px] h-[16px] rounded-full bg-[#3f9d8e]"></span>Published</span>
              </div>
              <svg class="w-[24px] h-[24px] ml-[33px] text-[#eee]"><use href="#i-dots"/></svg>
            </div>

          </div>
        </div>

        <!-- Pagination -->
        <div class="h-[152px] shrink-0 pt-[44px] pr-[168px] flex justify-end items-start text-[24px] text-[#eee]">
          <div class="h-[56px] flex items-center">
            <span>Total 38</span>
            <svg class="w-[22px] h-[22px] ml-[40px] text-[#666]" viewBox="0 0 24 24"><path d="m15 3-8 9 8 9" fill="none" stroke="currentColor" stroke-width="2"/></svg>
            <span class="w-[60px] h-[56px] ml-[24px] rounded-[10px] border-2 border-[#ef7430] text-[#ef7430] font-medium flex items-center justify-center">1</span>
            <svg class="w-[22px] h-[22px] ml-[24px] text-[#666]" viewBox="0 0 24 24"><path d="m9 3 8 9-8 9" fill="none" stroke="currentColor" stroke-width="2"/></svg>
            <div class="w-[200px] h-[56px] ml-[29px] rounded-[8px] border-2 border-[#333] flex items-center pl-[34px] pr-[15px]">
              50/page
              <svg class="w-[20px] h-[20px] ml-auto text-[#a8a8a8]" viewBox="0 0 24 24"><path d="m3 8 9 10 9-10" fill="none" stroke="currentColor" stroke-width="2"/></svg>
            </div>
          </div>
        </div>
      </main>
    </div>
  </div>
</body>
</html>
